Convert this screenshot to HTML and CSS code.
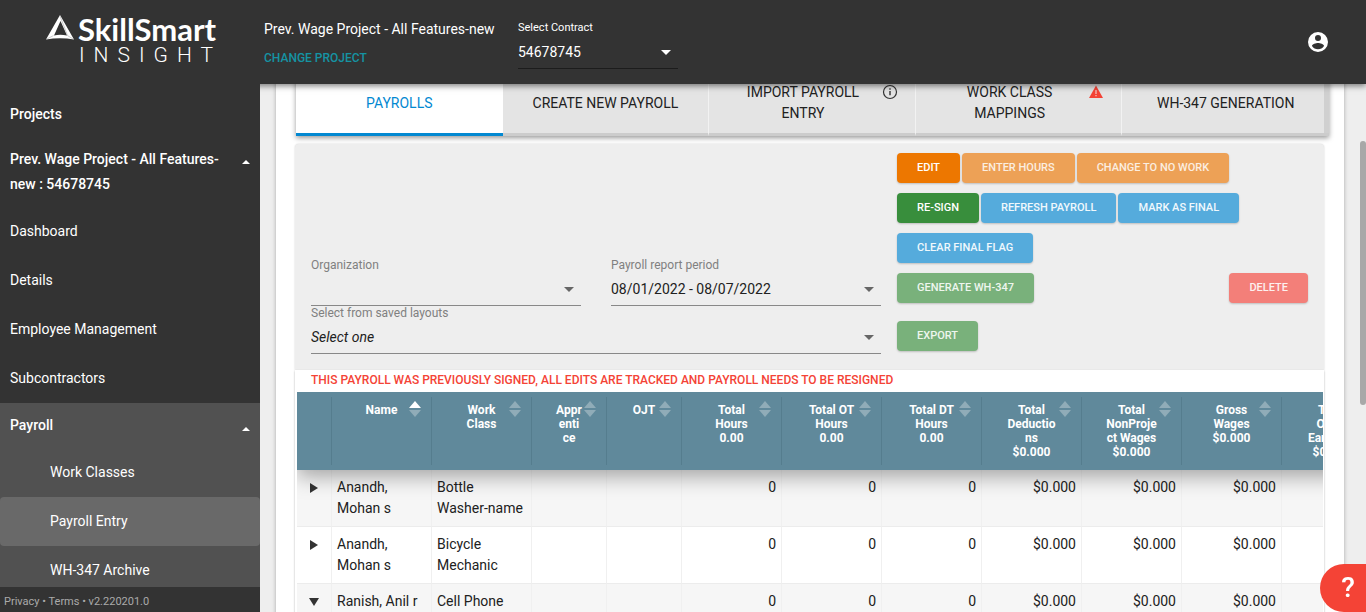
FILE: index.html
```html
<!DOCTYPE html>
<html lang="en">
<head>
<meta charset="utf-8">
<title>SkillSmart Insight - Payroll Entry</title>
<link rel="stylesheet" href="styles.css">
</head>
<body>
<svg class="defs" aria-hidden="true">
  <symbol id="down" viewBox="0 0 10 5"><path d="M0 0h10L5 5z"/></symbol>
  <symbol id="up" viewBox="0 0 8 4"><path d="M0 4h8L4 0z"/></symbol>
  <symbol id="sort" viewBox="0 0 12 16"><path class="asc" d="M0 7h12L6 0z"/><path class="desc" d="M0 9h12l-6 7z"/></symbol>
</svg>
<header class="topbar">
  <a class="brand" href="#" aria-label="SkillSmart Insight">
    <svg class="brand-mark" viewBox="0 0 28 25"><path fill="#fff" fill-rule="evenodd" d="M14 0 28 24.500Q14 22 0 24.500ZM14.500 6 8 20.500Q14 19 21 20.500Z"/><path d="M14 1 21.500 20.500 27 24M7.500 20.500 1 24" stroke="#aaa" stroke-width=".6" fill="none"/></svg>
    <span class="brand-text"><span class="brand-name">SkillSmart</span><span class="brand-sub">INSIGHT</span></span>
  </a>
  <div class="project">
    <span>Prev. Wage Project - All Features-new</span>
    <a class="change" href="#">CHANGE PROJECT</a>
  </div>
  <div class="contract">
    <label for="contract">Select Contract</label>
    <div class="select"><select id="contract"><option>54678745</option></select><svg class="caret"><use href="#down"/></svg></div>
  </div>
  <button class="account" aria-label="Account"><svg viewBox="0 0 24 24"><path fill="#fff" d="M12 2a10 10 0 1 0 0 20 10 10 0 0 0 0-20zm0 3a3 3 0 1 1 0 6 3 3 0 0 1 0-6zm0 14.200a7.200 7.200 0 0 1-6-3.220c.03-1.990 4-3.080 6-3.080s5.970 1.090 6 3.080a7.200 7.200 0 0 1-6 3.220z"/></svg></button>
</header>
<div class="body">
  <aside class="sidebar">
    <nav class="nav">
      <a class="item strong" href="#">Projects</a>
      <a class="item strong current" href="#"><span>Prev. Wage Project - All Features-new : 54678745</span><svg class="fold"><use href="#up"/></svg></a>
      <a class="item" href="#">Dashboard</a>
      <a class="item" href="#">Details</a>
      <a class="item" href="#">Employee Management</a>
      <a class="item" href="#">Subcontractors</a>
      <div class="group">
        <a class="item strong head" href="#"><span>Payroll</span><svg class="fold"><use href="#up"/></svg></a>
        <a class="item sub" href="#">Work Classes</a>
        <a class="item sub selected" href="#">Payroll Entry</a>
        <a class="item sub" href="#">WH-347 Archive</a>
      </div>
    </nav>
    <footer class="legal"><a href="#">Privacy</a> • <a href="#">Terms</a> • v2.220201.0</footer>
  </aside>
  <main class="main">
    <div class="card">
      <div class="tabs">
        <button class="tab active">PAYROLLS</button>
        <button class="tab">CREATE NEW PAYROLL</button>
        <button class="tab with-icon"><span>IMPORT PAYROLL ENTRY</span><svg class="tab-icon" viewBox="0 0 16 16"><circle cx="8" cy="8" r="6.500" fill="none" stroke="#333" stroke-width="1.200"/><path fill="#333" d="M7.300 7h1.400v4.300H7.300zM7.300 4.300h1.400v1.500H7.300z"/></svg></button>
        <button class="tab with-icon"><span>WORK CLASS MAPPINGS</span><svg class="tab-icon" viewBox="0 0 16 16"><path fill="#f44336" d="M8 1.500 15 14H1z"/><path fill="#f9c9c5" d="M7.400 6h1.200v4H7.400zM7.400 11h1.200v1.300H7.400z"/></svg></button>
        <button class="tab">WH-347 GENERATION</button>
      </div>
      <section class="panel">
        <form class="filters">
          <div class="field">
            <label for="org">Organization</label>
            <div class="select"><select id="org"><option></option></select><svg class="caret"><use href="#down"/></svg></div>
          </div>
          <div class="field">
            <label for="period">Payroll report period</label>
            <div class="select"><select id="period"><option>08/01/2022 - 08/07/2022</option></select><svg class="caret"><use href="#down"/></svg></div>
          </div>
          <div class="field wide">
            <label for="layouts">Select from saved layouts</label>
            <div class="select"><select class="placeholder" id="layouts"><option>Select one</option></select><svg class="caret"><use href="#down"/></svg></div>
          </div>
        </form>
        <div class="actions">
          <div class="row"><button class="btn orange">EDIT</button><button class="btn orange-soft">ENTER HOURS</button><button class="btn orange-soft">CHANGE TO NO WORK</button></div>
          <div class="row"><button class="btn green">RE-SIGN</button><button class="btn blue">REFRESH PAYROLL</button><button class="btn blue">MARK AS FINAL</button></div>
          <div class="row"><button class="btn blue">CLEAR FINAL FLAG</button></div>
          <div class="row split"><button class="btn green-soft">GENERATE WH-347</button><button class="btn red">DELETE</button></div>
          <div class="row last"><button class="btn green-soft">EXPORT</button></div>
        </div>
      </section>
      <section class="sheet">
        <p class="notice">THIS PAYROLL WAS PREVIOUSLY SIGNED, ALL EDITS ARE TRACKED AND PAYROLL NEEDS TO BE RESIGNED</p>
        <div class="table-wrap">
          <table class="grid">
            <colgroup><col class="c-toggle"><col class="c-wide"><col class="c-wide"><col class="c-slim"><col class="c-slim"><col class="c-wide"><col class="c-wide"><col class="c-wide"><col class="c-wide"><col class="c-wide"><col class="c-wide"><col class="c-wide"></colgroup>
            <thead>
              <tr>
                <th><div class="th blank"></div></th>
                <th><div class="th sorted">Name<svg class="sort"><use href="#sort"/></svg></div></th>
                <th><div class="th">Work Class<svg class="sort"><use href="#sort"/></svg></div></th>
                <th><div class="th">Apprentice<svg class="sort"><use href="#sort"/></svg></div></th>
                <th><div class="th">OJT<svg class="sort"><use href="#sort"/></svg></div></th>
                <th><div class="th">Total Hours<br>0.00<svg class="sort"><use href="#sort"/></svg></div></th>
                <th><div class="th">Total OT Hours<br>0.00<svg class="sort"><use href="#sort"/></svg></div></th>
                <th><div class="th">Total DT Hours<br>0.00<svg class="sort"><use href="#sort"/></svg></div></th>
                <th><div class="th">Total Deductions<br>$0.000<svg class="sort"><use href="#sort"/></svg></div></th>
                <th><div class="th">Total NonProject Wages<br>$0.000<svg class="sort"><use href="#sort"/></svg></div></th>
                <th><div class="th">Gross Wages<br>$0.000<svg class="sort"><use href="#sort"/></svg></div></th>
                <th><div class="th">Total Other Earnings<br>$0.000</div></th>
              </tr>
            </thead>
            <tbody>
              <tr><td><button class="toggle" aria-label="Expand"><svg viewBox="0 0 8 10"><path d="M0 0v10l8-5z"/></svg></button></td><td>Anandh, Mohan s</td><td>Bottle Washer-name</td><td></td><td></td><td class="num">0</td><td class="num">0</td><td class="num">0</td><td class="num">$0.000</td><td class="num">$0.000</td><td class="num">$0.000</td><td></td></tr>
              <tr><td><button class="toggle" aria-label="Expand"><svg viewBox="0 0 8 10"><path d="M0 0v10l8-5z"/></svg></button></td><td>Anandh, Mohan s</td><td>Bicycle Mechanic</td><td></td><td></td><td class="num">0</td><td class="num">0</td><td class="num">0</td><td class="num">$0.000</td><td class="num">$0.000</td><td class="num">$0.000</td><td></td></tr>
              <tr><td><button class="toggle open" aria-label="Collapse"><svg viewBox="0 0 10 8"><path d="M0 0h10L5 8z"/></svg></button></td><td>Ranish, Anil r</td><td>Cell Phone</td><td></td><td></td><td class="num">0</td><td class="num">0</td><td class="num">0</td><td class="num">$0.000</td><td class="num">$0.000</td><td class="num">$0.000</td><td></td></tr>
            </tbody>
          </table>
        </div>
      </section>
    </div>
    <div class="scroll-thumb"></div>
  </main>
</div>
<button class="help" aria-label="Help">?</button>
</body>
</html>
```
FILE: styles.css
```css
* { box-sizing: border-box; }
body {
  margin: 0;
  height: 100vh;
  display: flex;
  flex-direction: column;
  overflow: hidden;
  background: #eee;
  color: #212121;
  font: 14px/20px Roboto, sans-serif;
}
a { color: inherit; text-decoration: none; }
button, select { font: inherit; color: inherit; border: 0; background: none; padding: 0; margin: 0; }
.defs { position: absolute; width: 0; height: 0; }

/* Top bar */
.topbar {
  position: relative;
  z-index: 3;
  flex: none;
  display: flex;
  height: 84px;
  background: #333;
  color: #fff;
  box-shadow: 0 2px 6px rgba(0, 0, 0, .5);
}
.brand { width: 264px; padding: 15px 0 0 46px; display: flex; gap: 4px; }
.brand-mark { width: 28px; height: 25px; flex: none; }
.brand-text { display: flex; flex-direction: column; }
.brand-name { font: 700 31px/29px Lato, sans-serif; }
.brand-sub { margin-top: 1px; padding-left: 1px; font: 300 21px/20px Roboto, sans-serif; letter-spacing: 9px; }
.project { width: 254px; padding-top: 19px; display: flex; flex-direction: column; gap: 9px; white-space: nowrap; }
.change { font-size: 12px; font-weight: 500; color: #1593a3; }
.contract { width: 160px; padding-top: 21px; }
.contract label { display: block; font-size: 11px; line-height: 14px; margin-bottom: 1px; }
.contract .select { height: 33px; border-color: #1c1c1c; }
.contract .caret { fill: #fff; margin-right: 7px; }
.account { margin: 30px 36px 0 auto; width: 24px; height: 24px; }
.account svg { display: block; }

.select { display: grid; align-items: center; height: 32px; border-bottom: 1px solid #888; }
.select select { appearance: none; grid-area: 1 / 1; width: 100%; height: 100%; }
.caret { grid-area: 1 / 1; justify-self: end; width: 10px; height: 5px; margin-right: 7px; fill: #666; pointer-events: none; }

/* Sidebar */
.body { flex: 1; min-height: 0; display: flex; }
.sidebar { position: relative; z-index: 4; width: 260px; flex: none; display: flex; flex-direction: column; background: #333; color: #fff; }
.nav { flex: 1; min-height: 0; overflow: hidden; padding-top: 6px; }
.item { display: flex; align-items: center; justify-content: space-between; height: 49px; padding: 0 10px; line-height: 25px; }
.strong { font-weight: 500; }
.current { height: 68px; align-items: flex-start; padding-top: 8px; }
.current span { width: 216px; }
.fold { width: 8px; height: 4px; fill: #fff; flex: none; }
.current .fold { margin-top: 13px; }
.group { background: #515151; }
.head { height: 45px; }
.head .fold { margin-top: 6px; }
.sub { padding-left: 50px; }
.selected { background: #696969; border-radius: 4px; }
.legal { height: 25px; padding: 5px 4px 0; font-size: 11px; color: #aaa; background: #333; }

/* Main area */
.main { position: relative; flex: 1; min-width: 0; overflow: hidden; padding: 0 22px 0 16px; }
.card { margin-top: -14px; min-height: 100vh; padding: 0 20px 0 19px; background: #fff; box-shadow: 0 0 4px rgba(0, 0, 0, .3); }
.tabs {
  display: grid;
  grid-template-columns: repeat(5, minmax(0, 1fr));
  margin: 0 -5px 8px 1px;
  box-shadow: 0 2px 5px rgba(0, 0, 0, .4);
}
.tab {
  height: 66px;
  display: flex;
  align-items: center;
  justify-content: center;
  position: relative;
  padding: 3px 0 0;
  line-height: 21px;
  background: #e4e4e4;
  border-right: 1px solid #f2f2f2;
  border-bottom: 3px solid #ccc;
}
.tab.with-icon { padding: 3px 45px 0 27px; }
.tab:last-child { border-right: 0; box-shadow: inset -5px 0 #d0d0d0; }
.tab.active { background: #fff; color: #0288d1; border-bottom-color: #0288d1; border-right: 0; }
.tab-icon { position: absolute; right: 17px; top: 14px; width: 16px; height: 16px; }

.panel { display: flex; gap: 16px; padding: 9px 16px 16px; background: #eee; border-radius: 4px 4px 0 0; box-shadow: 0 0 2px rgba(0, 0, 0, .2); }
.filters { flex: 570; align-self: flex-end; display: grid; grid-template-columns: 1fr 1fr; column-gap: 30px; }
.wide { grid-column: 1 / 3; }
.field label { display: block; font-size: 12px; line-height: 14px; margin-bottom: 2px; color: #808080; }
.field select { padding-bottom: 2px; }
.placeholder { font-style: italic; }
.actions { flex: 411; display: flex; flex-direction: column; gap: 10px; padding-bottom: 3px; }
.row { display: flex; gap: 2px; }
.split { justify-content: space-between; }
.last { margin-top: 8px; }
.btn { height: 30px; padding: 0 20px 1px; border-radius: 4px; color: #fff; font-size: 11px; font-weight: 500; white-space: nowrap; box-shadow: 0 1px 2px rgba(0, 0, 0, .2); }
.orange { background: #ed7700; }
.orange-soft { background: #eda156; color: #fbeee0; }
.green { background: #388e3c; }
.green-soft { background: #79b17b; color: #eef6ee; }
.blue { background: #55abdc; color: #f0f8fc; }
.red { background: #f37f79; color: #fdf0ef; }

/* Payroll table */
.sheet { box-shadow: 0 1px 2px rgba(0, 0, 0, .3); background: #fff; position: relative; padding: 0 1px 0 2px; }
.notice { margin: 0; padding: 0 14px 2px; font-size: 12px; font-weight: 500; color: #f44336; }
.table-wrap { overflow: hidden; }
.grid { table-layout: fixed; width: 1085px; border-spacing: 0; }
.c-toggle { width: 35px; }
.c-wide { width: 100px; }
.c-slim { width: 75px; }
.grid thead { position: relative; z-index: 1; box-shadow: 0 6px 20px rgba(0, 0, 0, .35); }
.grid th { padding: 5px 0; background: #60899b; color: #fff; font-size: 12px; font-weight: 700; line-height: 14px; }
.th { position: relative; height: 68px; padding: 6px 24px 0; border-right: 1px solid #557d8e; overflow-wrap: break-word; }
.blank { padding: 0; }
.sort { position: absolute; top: 4px; right: 10px; width: 12px; height: 16px; fill: #90acb8; }
.asc { fill: var(--asc, #90acb8); }
.sorted .sort { --asc: #fff; }
.grid td { padding: 7px 5px; height: 57px; vertical-align: top; line-height: 21px; border-right: 1px solid #f0f0f0; border-bottom: 1px solid #ececec; }
.grid tbody tr:nth-child(odd) { background: #f6f6f6; }
.grid .num { text-align: right; }
.toggle { display: block; width: 8px; height: 10px; margin: 6px 0 0 8px; fill: #333; }
.toggle svg { display: block; }
.toggle.open { width: 10px; height: 8px; margin: 7px 0 0 7px; }

.scroll-thumb { position: absolute; right: 0; top: 57px; width: 6px; height: 264px; border-radius: 3px; background: #a8a8a8; }
.help { position: fixed; z-index: 5; right: 0; bottom: 0; width: 46px; height: 48px; padding-left: 10px; border-radius: 24px 0 0 24px; background: #f44336; color: #fff; font-size: 28px; font-weight: 500; }
```
